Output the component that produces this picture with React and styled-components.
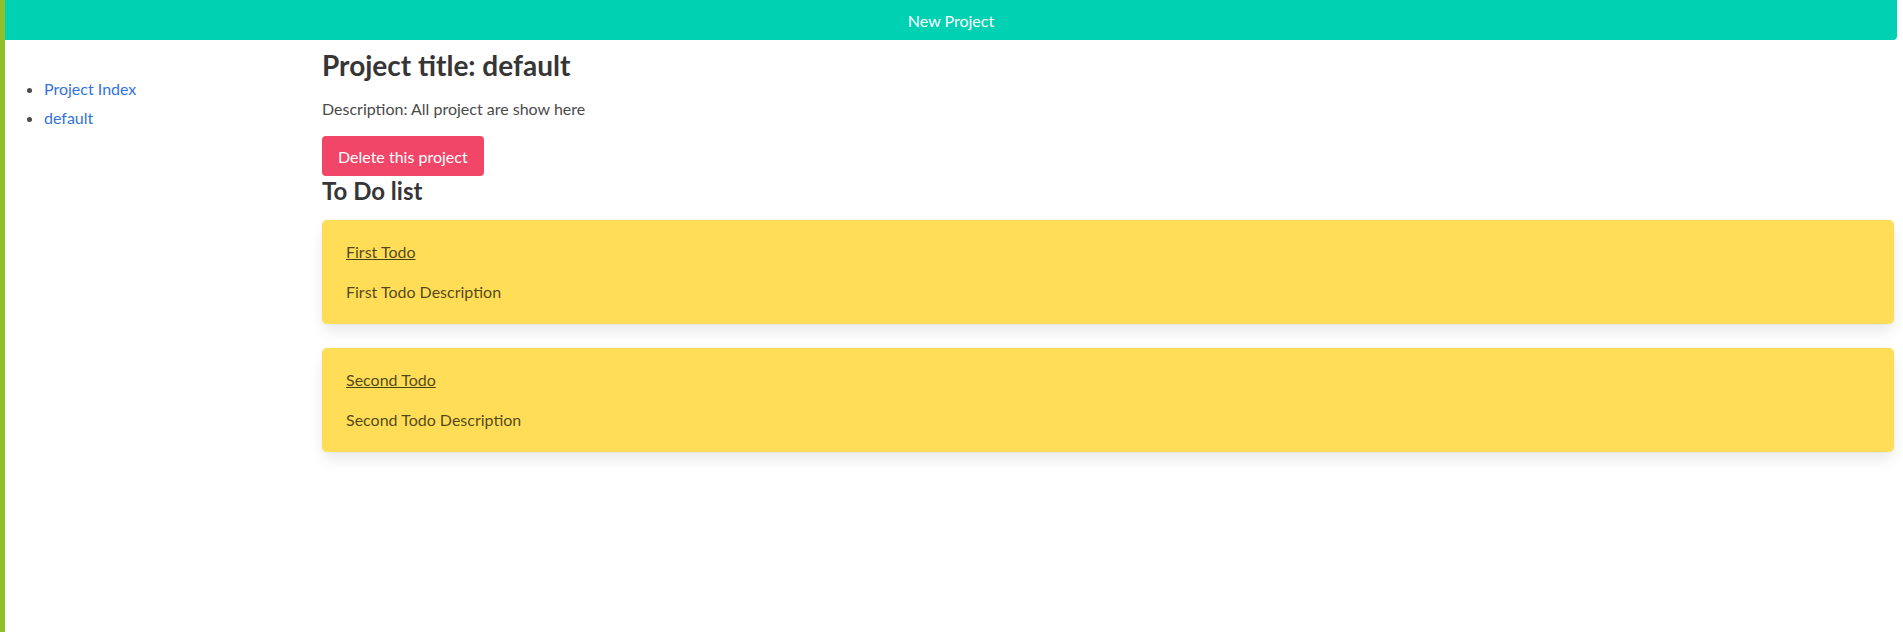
import React from "react";
import styled, { createGlobalStyle } from "styled-components";

const Global = createGlobalStyle`
  html, body { margin: 0; padding: 0; background: #fff; }
  body { font-family: Lato, "Liberation Sans", sans-serif; color: #4a4a4a; font-size: 16px; }
`;

const Page = styled.div`
  min-height: 632px;
  border-left: 5px solid #8fc02a;
  box-sizing: border-box;
  padding-right: 6px;
`;

const HeaderButton = styled.button`
  display: block;
  width: 100%;
  height: 40px;
  border: none;
  border-radius: 0 0 4px 0;
  background: #00d1b2;
  color: #fff;
  font-family: inherit;
  font-size: 16px;
  cursor: pointer;
`;

const Columns = styled.div`
  display: grid;
  grid-template-columns: 317px 1fr;
  padding-right: 3px;
`;

const Sidebar = styled.ul`
  margin: 0;
  padding: 34px 0 0 39px;
  list-style: disc;
  color: #4a4a4a;
`;

const SideItem = styled.li`
  line-height: 29px;
  font-size: 16px;
`;

const SideLink = styled.a`
  color: #3273dc;
  text-decoration: none;
`;

const Main = styled.main`
  padding-top: 6px;
`;

const Title = styled.h1`
  margin: 0;
  font-size: 28px;
  font-weight: 700;
  color: #363636;
  line-height: 38px;
`;

const Desc = styled.p`
  margin: 13px 0 15px;
  line-height: 24px;
  color: #4a4a4a;
`;

const DangerButton = styled.button`
  height: 40px;
  padding: 0 16px;
  border: none;
  border-radius: 4px;
  background: #f14668;
  color: #fff;
  font-family: inherit;
  font-size: 16px;
`;

const Subtitle = styled.h2`
  margin: 0 0 14px;
  font-size: 24px;
  font-weight: 700;
  color: #363636;
  line-height: 30px;
`;

const TodoCard = styled.div`
  background: #ffdd57;
  border-radius: 5px;
  padding: 20px 24px 20px;
  margin-bottom: 24px;
  box-shadow: 0 0.5em 1em -0.125em rgba(10, 10, 10, 0.1), 0 0 0 1px rgba(10, 10, 10, 0.02);
  color: rgba(0, 0, 0, 0.7);
`;

const TodoLink = styled.a`
  display: block;
  color: rgba(0, 0, 0, 0.7);
  text-decoration: underline;
  line-height: 24px;
  margin-bottom: 16px;
`;

const TodoDesc = styled.p`
  margin: 0;
  line-height: 24px;
`;

const todos = [
  { title: "First Todo", desc: "First Todo Description" },
  { title: "Second Todo", desc: "Second Todo Description" },
];

export default function App() {
  return (
    <>
      <Global />
      <Page>
        <HeaderButton>New Project</HeaderButton>
        <Columns>
          <Sidebar>
            <SideItem><SideLink href="#">Project Index</SideLink></SideItem>
            <SideItem><SideLink href="#">default</SideLink></SideItem>
          </Sidebar>
          <Main>
            <Title>Project title: default</Title>
            <Desc>Description: All project are show here</Desc>
            <DangerButton>Delete this project</DangerButton>
            <Subtitle>To Do list</Subtitle>
            {todos.map((t) => (
              <TodoCard key={t.title}>
                <TodoLink href="#">{t.title}</TodoLink>
                <TodoDesc>{t.desc}</TodoDesc>
              </TodoCard>
            ))}
          </Main>
        </Columns>
      </Page>
    </>
  );
}
